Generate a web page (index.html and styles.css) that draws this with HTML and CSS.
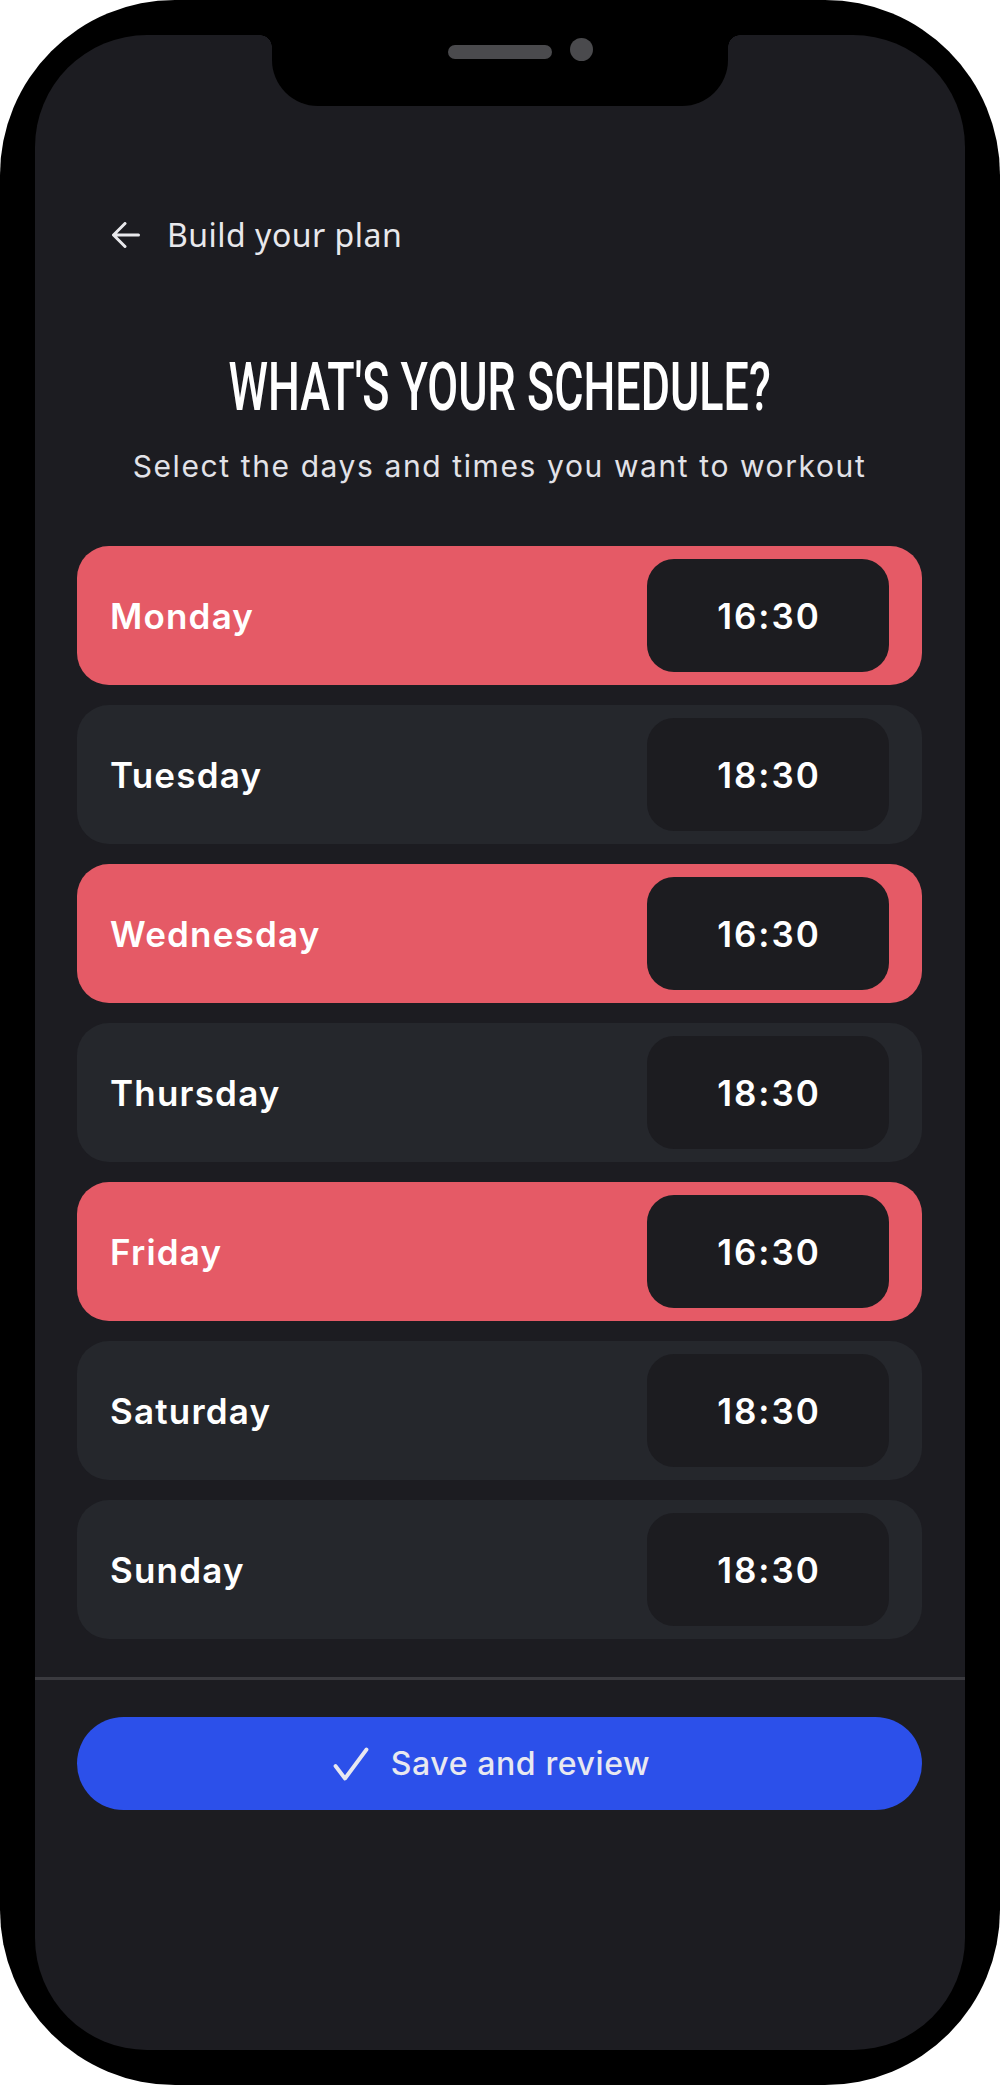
FILE: index.html
```html
<!DOCTYPE html>
<html lang="en">
<head>
<meta charset="utf-8">
<title>What's your schedule?</title>
<link rel="stylesheet" href="styles.css">
</head>
<body>
<div class="phone">
  <div class="screen">
    <div class="notch">
      <span class="speaker"></span>
      <span class="camera"></span>
    </div>

    <header class="topbar">
      <svg class="back" width="28" height="26" viewBox="0 0 28 26" aria-hidden="true">
        <path d="M26.5 13H2M13 1.5L1.5 13L13 24.5" fill="none" stroke="#e8e8ec" stroke-width="3" stroke-linecap="round" stroke-linejoin="round"/>
      </svg>
      <span class="topbar-title">Build your plan</span>
    </header>

    <h1 class="title"><span class="title-inner">WHAT'S YOUR SCHEDULE?</span></h1>
    <p class="subtitle">Select the days and times you want to workout</p>

    <ul class="days">
      <li class="day active"><span class="day-name">Monday</span><span class="time">16:30</span></li>
      <li class="day"><span class="day-name">Tuesday</span><span class="time">18:30</span></li>
      <li class="day active"><span class="day-name">Wednesday</span><span class="time">16:30</span></li>
      <li class="day"><span class="day-name">Thursday</span><span class="time">18:30</span></li>
      <li class="day active"><span class="day-name">Friday</span><span class="time">16:30</span></li>
      <li class="day"><span class="day-name">Saturday</span><span class="time">18:30</span></li>
      <li class="day"><span class="day-name">Sunday</span><span class="time">18:30</span></li>
    </ul>

    <div class="divider"></div>

    <div class="actions">
      <button class="save" type="button">
        <svg class="check" width="36" height="34" viewBox="0 0 36 34" aria-hidden="true">
          <path d="M2.5 19L12 31.5L33.5 2.5" fill="none" stroke="#e8e8f0" stroke-width="3.8" stroke-linecap="round" stroke-linejoin="round"/>
        </svg>
        <span>Save and review</span>
      </button>
    </div>
  </div>
</div>
</body>
</html>
```

FILE: styles.css
```css
* { box-sizing: border-box; }

html, body {
  margin: 0;
  padding: 0;
  background: #ffffff;
}

.phone {
  width: 1000px;
  height: 2085px;
  background: #000000;
  border-radius: 175px;
  padding: 35px;
}

.screen {
  position: relative;
  height: 2015px;
  background: #1c1c21;
  border-radius: 112px;
  padding: 178px 43px 0 42px;
  display: flex;
  flex-direction: column;
}

/* notch overlays the top of the screen */
.notch {
  position: absolute;
  top: 0;
  left: 237px;
  width: 456px;
  height: 71px;
  background: #000;
  border-radius: 0 0 46px 46px;
  display: flex;
  align-items: flex-start;
  padding-left: 176px;
  gap: 18px;
}
.notch::before,
.notch::after {
  content: "";
  position: absolute;
  top: 0;
  width: 12px;
  height: 12px;
}
.notch::before {
  left: -12px;
  background: radial-gradient(circle at 0 100%, transparent 11.5px, #000 12px);
}
.notch::after {
  right: -12px;
  background: radial-gradient(circle at 100% 100%, transparent 11.5px, #000 12px);
}
.speaker {
  width: 104px;
  height: 14px;
  margin-top: 10px;
  border-radius: 7px;
  background: #4a4a4d;
}
.camera {
  width: 23px;
  height: 23px;
  margin-top: 3px;
  border-radius: 50%;
  background: #4a4a4d;
}

.topbar {
  display: flex;
  align-items: center;
  height: 44px;
  padding-left: 35px;
  gap: 27px;
}
.back { display: block; flex: none; }
.topbar-title {
  font-family: "Noto Sans", "Open Sans", sans-serif;
  font-size: 32px;
  letter-spacing: 0.5px;
  color: #e8e8ec;
  line-height: 44px;
}

.title {
  margin: 98px 0 0 0;
  text-align: center;
  font-family: Roboto, "Liberation Sans", sans-serif;
  font-weight: 500;
  font-size: 66px;
  line-height: 66px;
  color: #ffffff;
}
.title-inner {
  display: inline-block;
  transform: scaleX(0.68);
  transform-origin: 50% 50%;
  white-space: nowrap;
}

.subtitle {
  margin: 27px 0 0 0;
  text-align: center;
  font-family: Inter, Roboto, sans-serif;
  font-weight: 400;
  font-size: 30px;
  line-height: 36px;
  letter-spacing: 1.6px;
  color: #e2e2e8;
}

.days {
  list-style: none;
  margin: 62px 0 0 0;
  padding: 0;
  display: flex;
  flex-direction: column;
  gap: 20px;
}
.day {
  height: 139px;
  border-radius: 32px;
  background: #25272c;
  display: flex;
  align-items: center;
  justify-content: space-between;
  padding: 0 33px 0 33px;
}
.day.active { background: #e55a66; }

.day-name,
.time {
  font-family: Inter, Roboto, sans-serif;
  font-weight: 600;
  font-size: 35px;
  color: #ffffff;
}
.day-name { letter-spacing: 1.2px; }
.time {
  width: 242px;
  height: 113px;
  border-radius: 27px;
  background: #1c1c20;
  display: flex;
  align-items: center;
  justify-content: center;
  letter-spacing: 2px;
  padding-left: 2px;
}

.divider {
  margin: 38px -43px 0 -42px;
  height: 3px;
  background: #3a3a3f;
}

.actions {
  margin-top: 37px;
}
.save {
  width: 100%;
  height: 93px;
  border: 0;
  border-radius: 47px;
  background: #2c50ea;
  display: flex;
  align-items: center;
  justify-content: center;
  gap: 22px;
  font-family: Inter, Roboto, sans-serif;
  font-weight: 500;
  font-size: 32px;
  letter-spacing: 0.6px;
  color: #e8e8f0;
  padding: 0 16px 0 0;
}
.check { display: block; flex: none; }
```
